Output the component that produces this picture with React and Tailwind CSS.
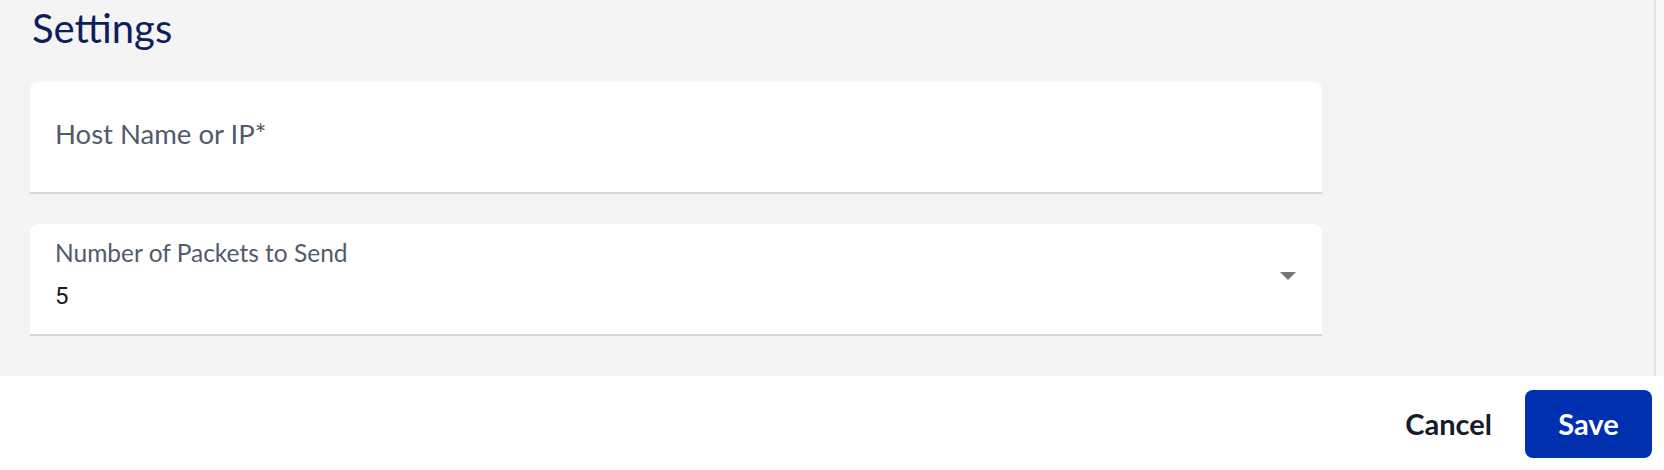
export default function App() {
  return (
    <div className="w-[1664px] h-[470px] bg-white flex flex-col" style={{ fontFamily: 'Lato, "Noto Sans", sans-serif' }}>
      {/* settings panel */}
      <div className="flex h-[376px]">
        <div className="flex-1 bg-[#f4f4f4] border-r-2 border-[#e5e5e5] pl-[30px]">
          <h2 className="text-[40px] leading-[48px] text-[#0c1f5c] pl-[2px] pt-[4px]">Settings</h2>

          <div className="mt-[30px] w-[1292px] h-[112px] bg-white rounded-t-lg border-b-2 border-[#d3d6dd] flex items-center pl-[25px]">
            <span className="text-[27.5px] text-[#525a6c] -mt-[6px]">Host Name or IP*</span>
          </div>

          <div className="mt-[30px] w-[1292px] h-[112px] bg-white rounded-t-lg border-b-2 border-[#d3d6dd] flex items-center pl-[25px] pr-[26px]">
            <div className="flex-1 flex flex-col -mt-[8px]">
              <span className="text-[24.5px] leading-[30px] text-[#525a6c]">Number of Packets to Send</span>
              <span className="text-[24px] leading-[32px] mt-[12px] text-[#1a1a1a]" style={{ fontFamily: 'Roboto, sans-serif' }}>5</span>
            </div>
            <svg width="16" height="8" viewBox="0 0 16 8" className="-mt-[6px]">
              <path d="M0 0 L16 0 L8 8 Z" fill="#757575" />
            </svg>
          </div>
        </div>
        <div className="w-[8px] bg-[#f8f8f8]"></div>
      </div>

      {/* footer actions */}
      <div className="flex justify-end items-start pt-[14px] pr-[12px] gap-[33px]">
        <button className="h-[68px] text-[29px] font-bold text-[#151b2c]">Cancel</button>
        <button className="w-[127px] h-[68px] rounded-lg bg-[#0030b0] text-white text-[29px] font-bold">Save</button>
      </div>
    </div>
  );
}
